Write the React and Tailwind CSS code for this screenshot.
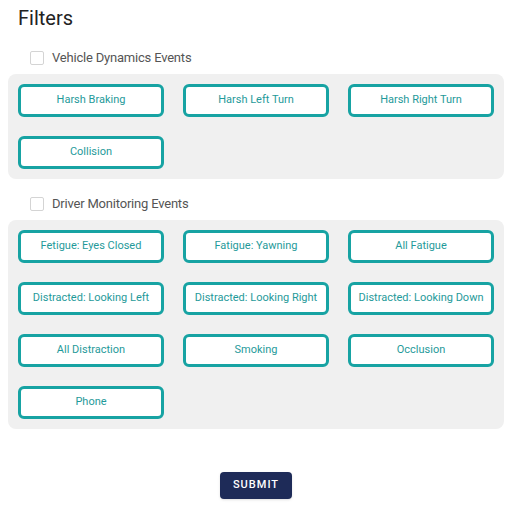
import { useState } from 'react'

const vehicleEvents = ['Harsh Braking', 'Harsh Left Turn', 'Harsh Right Turn', 'Collision']
const driverEvents = [
  'Fetigue: Eyes Closed',
  'Fatigue: Yawning',
  'All Fatigue',
  'Distracted: Looking Left',
  'Distracted: Looking Right',
  'Distracted: Looking Down',
  'All Distraction',
  'Smoking',
  'Occlusion',
  'Phone',
]

function Group({ label, items }) {
  const [checked, setChecked] = useState(false)
  return (
    <div>
      <label className="flex items-center h-[14px] pl-[30px] gap-[8px] cursor-pointer">
        <input
          type="checkbox"
          checked={checked}
          onChange={(e) => setChecked(e.target.checked)}
          className="appearance-none w-[14px] h-[14px] border border-[#d4d4d4] rounded-[2px] bg-white"
        />
        <span className="text-[13px] text-[#555] tracking-[-0.2px]">{label}</span>
      </label>
      <div className="mt-[9px] ml-[8px] w-[496px] bg-[#f0f0f0] rounded-[8px] px-[10px] pt-[10px] pb-[10px] grid grid-cols-3 gap-x-[19px] gap-y-[19px]">
        {items.map((item) => (
          <button
            key={item}
            className="h-[33px] border-[3px] border-[#17a3a3] rounded-[6px] bg-white text-[11px] text-[#1f9a9a] hover:bg-teal-50"
          >
            {item}
          </button>
        ))}
      </div>
    </div>
  )
}

export default function App() {
  return (
    <div className="w-[510px] h-[519px] bg-white font-['Roboto',sans-serif]">
      <h1 className="pl-[18px] pt-[6px] text-[20px] leading-[24px] text-[#222]">Filters</h1>
      <div className="mt-[21px]">
        <Group label="Vehicle Dynamics Events" items={vehicleEvents} />
      </div>
      <div className="mt-[18px]">
        <Group label="Driver Monitoring Events" items={driverEvents} />
      </div>
      <div className="flex justify-center mt-[43px]">
        <button className="ml-[2px] w-[72px] h-[27px] bg-[#1e2b58] rounded-[4px] text-white text-[11px] font-medium tracking-[1px] shadow">
          SUBMIT
        </button>
      </div>
    </div>
  )
}
